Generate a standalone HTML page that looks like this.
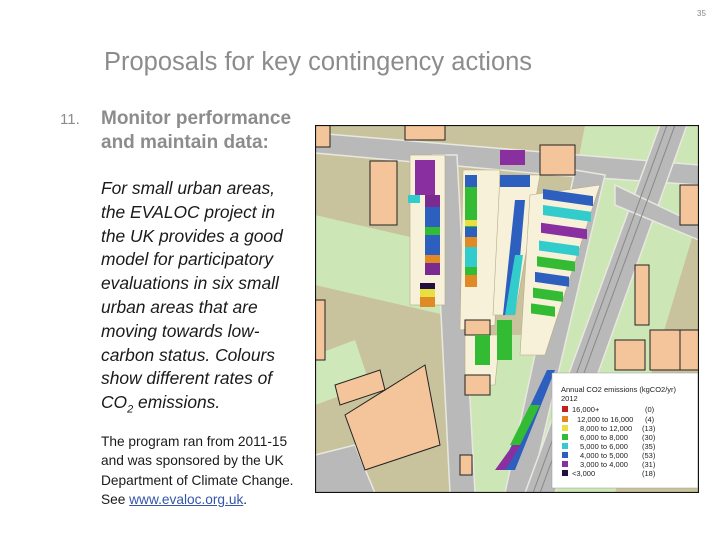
<!DOCTYPE html>
<html><head><meta charset="utf-8"><style>
body{margin:0;width:720px;height:540px;background:#fff;position:relative;overflow:hidden;font-family:"Liberation Sans",Arial,sans-serif}
.t{position:absolute;white-space:nowrap}
</style></head><body>
<div class="t" style="left:697px;top:9px;font-size:8px;color:#888">35</div>
<div class="t" style="left:104px;top:48px;font-size:25.5px;color:#8c8c8c">Proposals for key contingency actions</div>
<div class="t" style="left:60px;top:111px;font-size:15px;color:#8c8c8c">11.</div>
<div class="t" style="left:101px;top:107px;font-size:19px;font-weight:bold;color:#8c8c8c;line-height:24px">Monitor performance<br>and maintain data:</div>
<div class="t" style="left:101px;top:177px;font-size:17.4px;font-style:italic;color:#1a1a1a;line-height:23.8px">For small urban areas,<br>the EVALOC project in<br>the UK provides a good<br>model for participatory<br>evaluations in six small<br>urban areas that are<br>moving towards low-<br>carbon status. Colours<br>show different rates of<br>CO<sub style="font-size:11px">2</sub> emissions.</div>
<div class="t" style="left:101px;top:432px;font-size:13.7px;color:#1a1a1a;line-height:19.4px">The program ran from 2011-15<br>and was sponsored by the UK<br>Department of Climate Change.<br>See <span style="color:#3355aa;text-decoration:underline">www.evaloc.org.uk</span>.</div>
<svg style="position:absolute;left:315px;top:125px" width="384" height="368" viewBox="0 0 384 368">
<rect width="384" height="368" fill="#c8c39c"/>
<polygon points="270,0 384,0 384,90 300,368 200,368" fill="#cde6b6"/>
<polygon points="0,90 130,120 130,190 0,160" fill="#cde6b6"/>
<polygon points="150,210 230,210 205,368 150,368" fill="#cde6b6"/>
<polygon points="0,230 40,215 55,260 0,280" fill="#cfe8b9"/>
<g fill="#b9b9b9" stroke="#e8e8e0" stroke-width="1.5">
<polygon points="0,8 384,40 384,60 240,50 0,28"/>
<polygon points="118,30 142,30 160,368 135,368"/>
<polygon points="260,45 290,50 215,368 190,368"/>
<polygon points="345,0 372,0 240,368 210,368"/>
<polygon points="0,330 40,320 60,368 0,368"/>
<polygon points="300,60 384,100 384,115 300,80"/>
</g>
<g stroke="#888" stroke-width="1"><line x1="360" y1="0" x2="225" y2="368"/><line x1="352" y1="0" x2="218" y2="368"/></g>
<g fill="#f6f1d8" stroke="#b8a98a" stroke-width=".6">
<rect x="95" y="30" width="35" height="150"/>
<polygon points="148,45 185,45 180,200 145,205"/>
<polygon points="185,50 225,50 200,190 178,190"/>
<polygon points="215,70 285,60 230,230 205,230"/>
<polygon points="150,210 185,210 180,260 150,260"/>
</g>
<g fill="#f4c49b" stroke="#222" stroke-width="1">
<rect x="55" y="36" width="27" height="64"/>
<polygon points="30,290 110,240 125,320 50,345"/>
<polygon points="20,260 65,245 70,265 25,280"/>
<rect x="0" y="175" width="10" height="60"/>
<rect x="0" y="0" width="15" height="22"/>
<rect x="90" y="0" width="40" height="15"/>
<rect x="225" y="20" width="35" height="30"/>
<rect x="335" y="205" width="30" height="40"/>
<rect x="365" y="205" width="19" height="40"/>
<rect x="300" y="215" width="30" height="30"/>
<rect x="320" y="140" width="14" height="60"/>
<rect x="365" y="60" width="19" height="40"/>
<rect x="150" y="195" width="25" height="15"/>
<rect x="150" y="250" width="25" height="20"/>
<rect x="145" y="330" width="12" height="20"/>
</g>
<polygon points="185,25 210,25 210,40 185,40" fill="#8a2fa0"/>
<g>
<rect x="100" y="35" width="20" height="35" fill="#8a2fa0"/>
<rect x="110" y="70" width="15" height="12" fill="#7a2a90"/>
<rect x="110" y="82" width="15" height="20" fill="#2d5fbf"/>
<rect x="110" y="102" width="15" height="8" fill="#33bb33"/>
<rect x="110" y="110" width="15" height="20" fill="#2d5fbf"/>
<rect x="110" y="130" width="15" height="8" fill="#e08a25"/>
<rect x="110" y="138" width="15" height="12" fill="#7a2a90"/>
<rect x="105" y="158" width="15" height="6" fill="#231040"/>
<rect x="105" y="164" width="15" height="8" fill="#e8e040"/>
<rect x="105" y="172" width="15" height="10" fill="#e08a25"/>
<rect x="93" y="70" width="12" height="8" fill="#33cccc"/>
<rect x="150" y="50" width="12" height="12" fill="#2d5fbf"/>
<rect x="150" y="62" width="12" height="40" fill="#33bb33"/>
<rect x="150" y="95" width="12" height="6" fill="#e8e040"/>
<rect x="150" y="102" width="12" height="10" fill="#2d5fbf"/>
<rect x="150" y="112" width="12" height="10" fill="#e08a25"/>
<rect x="150" y="122" width="12" height="20" fill="#33cccc"/>
<rect x="150" y="142" width="12" height="10" fill="#33bb33"/>
<rect x="150" y="150" width="12" height="12" fill="#e08a25"/>
<rect x="185" y="50" width="30" height="12" fill="#2d5fbf"/>
<polygon points="200,75 210,75 200,190 188,190" fill="#2d5fbf"/>
<polygon points="200,130 208,130 200,190 190,190" fill="#33cccc"/>
<rect x="182" y="195" width="15" height="40" fill="#33bb33"/>
<rect x="160" y="210" width="15" height="30" fill="#33bb33"/>
<g transform="skewY(8)">
<rect x="228" y="32" width="50" height="10" fill="#2d5fbf"/>
<rect x="228" y="48" width="48" height="10" fill="#33cccc"/>
<rect x="226" y="66" width="46" height="10" fill="#8a2fa0"/>
<rect x="224" y="84" width="40" height="10" fill="#33cccc"/>
<rect x="222" y="100" width="38" height="10" fill="#33bb33"/>
<rect x="220" y="116" width="34" height="10" fill="#2d5fbf"/>
<rect x="218" y="132" width="30" height="10" fill="#33bb33"/>
<rect x="216" y="148" width="24" height="10" fill="#33bb33"/>
</g>
<polygon points="232,245 240,245 200,345 185,345" fill="#2d5fbf"/>
<polygon points="215,280 225,280 205,320 195,320" fill="#33bb33"/>
<polygon points="198,320 206,320 190,345 180,345" fill="#8a2fa0"/>
</g>
<rect x="237" y="248" width="146" height="115" fill="#fff" stroke="#999" stroke-width=".5"/>
<g font-size="7.5" fill="#222" font-family="Liberation Sans,sans-serif">
<text x="246" y="267">Annual CO2 emissions (kgCO2/yr)</text>
<text x="246" y="276">2012</text>
<g>
<rect x="247" y="281" width="6" height="6" fill="#c02020"/><text x="257" y="287">16,000+</text><text x="330" y="287">(0)</text>
<rect x="247" y="291" width="6" height="6" fill="#e08a25"/><text x="262" y="297">12,000 to 16,000</text><text x="330" y="297">(4)</text>
<rect x="247" y="300" width="6" height="6" fill="#e8e040"/><text x="265" y="306">8,000 to 12,000</text><text x="327" y="306">(13)</text>
<rect x="247" y="309" width="6" height="6" fill="#33bb33"/><text x="265" y="315">6,000 to  8,000</text><text x="327" y="315">(30)</text>
<rect x="247" y="318" width="6" height="6" fill="#33cccc"/><text x="265" y="324">5,000 to  6,000</text><text x="327" y="324">(35)</text>
<rect x="247" y="327" width="6" height="6" fill="#2d5fbf"/><text x="265" y="333">4,000 to  5,000</text><text x="327" y="333">(53)</text>
<rect x="247" y="336" width="6" height="6" fill="#8a2fa0"/><text x="265" y="342">3,000 to  4,000</text><text x="327" y="342">(31)</text>
<rect x="247" y="345" width="6" height="6" fill="#231040"/><text x="257" y="351">&lt;3,000</text><text x="327" y="351">(18)</text>
</g></g>
<rect x="0.5" y="0.5" width="383" height="367" fill="none" stroke="#111" stroke-width="1.2"/>
</svg>
</body></html>
